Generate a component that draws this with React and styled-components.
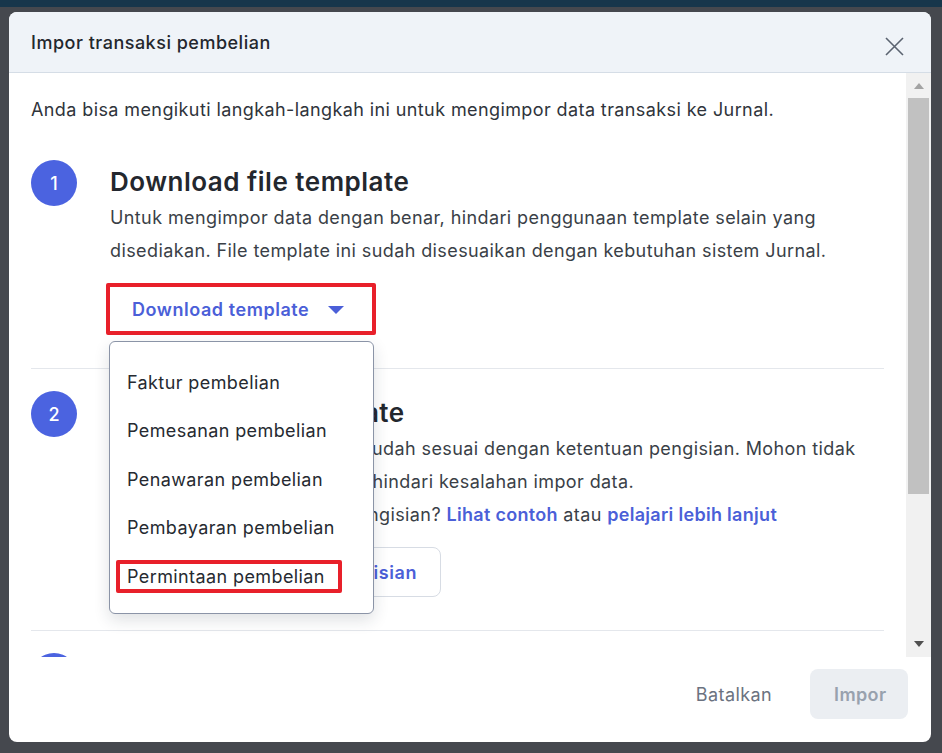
import React from "react";
import styled, { createGlobalStyle } from "styled-components";

const GlobalStyle = createGlobalStyle`
  html, body {
    margin: 0;
    padding: 0;
    background: #45484e;
  }
  body {
    font-family: "Inter", "Noto Sans", sans-serif;
    color: #2b2f36;
  }
  * { box-sizing: border-box; }
`;

const Backdrop = styled.div`
  width: 942px;
  height: 753px;
  background: #45484e;
  border-top: 7px solid #17364b;
  padding: 5px 11px 11px 9px;
`;

const Modal = styled.div`
  width: 922px;
  height: 730px;
  background: #ffffff;
  border-radius: 8px;
  overflow: hidden;
  display: flex;
  flex-direction: column;
`;

const Header = styled.div`
  height: 61px;
  flex: 0 0 61px;
  background: #eff3f8;
  border-bottom: 1px solid #d5dde6;
  display: flex;
  align-items: center;
  justify-content: space-between;
  padding: 0 26px 0 22px;
`;

const HeaderTitle = styled.h1`
  margin: 0;
  font-size: 18px;
  font-weight: 500;
  color: #23272e;
  letter-spacing: 0.5px;
`;

const CloseButton = styled.button`
  border: none;
  background: transparent;
  padding: 0;
  margin-top: 8px;
  width: 22px;
  height: 22px;
  display: flex;
  align-items: center;
  justify-content: center;
  cursor: pointer;
`;

const BodyWrap = styled.div`
  flex: 1;
  display: flex;
  overflow: hidden;
`;

const Content = styled.div`
  flex: 1;
  padding: 20px 22px 0 22px;
  overflow: hidden;
`;

const Intro = styled.p`
  margin: 0 0 12px;
  font-size: 18px;
  letter-spacing: 0.4px;
  line-height: 33px;
  color: #2f343b;
`;

const Step = styled.div`
  display: flex;
  gap: 33px;
  padding: 22px 0 33px;
  border-bottom: 1px solid #e4e7ec;
`;

const StepNumber = styled.div`
  flex: 0 0 46px;
  width: 46px;
  height: 46px;
  border-radius: 50%;
  background: #4b63e0;
  color: #ffffff;
  font-size: 18px;
  font-weight: 500;
  display: flex;
  align-items: center;
  justify-content: center;
`;

const StepBody = styled.div`
  flex: 1;
  display: flex;
  flex-direction: column;
  align-items: flex-start;
`;

const StepTitle = styled.h2`
  margin: 3px 0 0;
  font-size: 26px;
  letter-spacing: 0.5px;
  line-height: 38px;
  font-weight: 600;
  color: #23272e;
`;

const StepText = styled.p`
  margin: 0;
  font-size: 18px;
  letter-spacing: 0.4px;
  line-height: 33px;
  color: #3a3f47;
`;

const Link = styled.a`
  color: #4b5fd8;
  font-weight: 600;
  text-decoration: none;
  letter-spacing: 0.3px;
`;

const DropdownAnchor = styled.div`
  position: relative;
  margin: 16px 0 0 -4px;
`;

const Highlight = styled.div`
  border: 4px solid #e8202a;
  border-radius: 2px;
`;

const DownloadButton = styled.button`
  display: flex;
  align-items: center;
  gap: 19px;
  width: 262px;
  height: 44px;
  border: none;
  background: #ffffff;
  padding: 0 0 0 22px;
  font-family: "Inter", sans-serif;
  font-size: 18px;
  letter-spacing: 0.55px;
  font-weight: 600;
  color: #4b5fd8;
  cursor: pointer;
`;

const Caret = styled.span`
  width: 0;
  height: 0;
  border-left: 8px solid transparent;
  border-right: 8px solid transparent;
  border-top: 8px solid #4b5fd8;
  margin-top: 2px;
`;

const Menu = styled.ul`
  position: absolute;
  top: 58px;
  left: 3px;
  width: 265px;
  margin: 0;
  padding: 16px 0 12px;
  list-style: none;
  background: #ffffff;
  border: 1px solid #8b94a7;
  border-radius: 6px;
  box-shadow: 0 6px 16px rgba(30, 40, 60, 0.14);
  z-index: 5;
`;

const MenuItem = styled.li`
  height: 48.5px;
  display: flex;
  align-items: center;
  padding-left: 17px;
  font-size: 18px;
  letter-spacing: 0.4px;
  color: #262a31;
`;

const MenuLabel = styled.span`
  display: inline-block;
  ${(p) =>
    p.$highlighted &&
    `
    border: 4px solid #e8202a;
    border-radius: 2px;
    margin-left: -11px;
    padding: 2px 13px 2px 7px;
  `}
`;

const OutlineButton = styled.button`
  margin-top: 16px;
  height: 50px;
  padding: 0 23px;
  border: 1px solid #d7dce4;
  border-radius: 8px;
  background: #ffffff;
  font-family: "Inter", sans-serif;
  font-size: 18px;
  letter-spacing: 0.55px;
  font-weight: 600;
  color: #4b5fd8;
`;

const Scrollbar = styled.div`
  flex: 0 0 25px;
  background: #f1f1f1;
  display: flex;
  flex-direction: column;
  align-items: center;
  padding: 10px 0 10px;
`;

const Arrow = styled.span`
  width: 0;
  height: 0;
  border-left: 5px solid transparent;
  border-right: 5px solid transparent;
  ${(p) =>
    p.$down
      ? `border-top: 6px solid #505050;`
      : `border-bottom: 6px solid #a3a3a3;`}
`;

const Thumb = styled.div`
  width: 21px;
  height: 396px;
  margin-top: 9px;
  background: #c1c1c1;
`;

const Track = styled.div`
  flex: 1;
`;

const Footer = styled.div`
  flex: 0 0 85px;
  display: flex;
  justify-content: flex-end;
  align-items: flex-start;
  gap: 14px;
  padding: 12px 23px 23px;
`;

const FooterButton = styled.button`
  height: 50px;
  padding: 0 24px;
  border: none;
  border-radius: 8px;
  font-family: "Inter", sans-serif;
  font-size: 18px;
  letter-spacing: 0.4px;
  background: ${(p) => (p.$primary ? "#ebeef2" : "transparent")};
  color: ${(p) => (p.$primary ? "#98a1ae" : "#6b7280")};
  font-weight: ${(p) => (p.$primary ? 600 : 400)};
  width: ${(p) => (p.$primary ? "98px" : "auto")};
`;

const templates = [
  "Faktur pembelian",
  "Pemesanan pembelian",
  "Penawaran pembelian",
  "Pembayaran pembelian",
  "Permintaan pembelian",
];

export default function App() {
  return (
    <>
      <GlobalStyle />
      <Backdrop>
        <Modal>
          <Header>
            <HeaderTitle>Impor transaksi pembelian</HeaderTitle>
            <CloseButton aria-label="Tutup">
              <svg width="19" height="19" viewBox="0 0 19 19">
                <path
                  d="M1 1 L18 18 M18 1 L1 18"
                  stroke="#5b6370"
                  strokeWidth="1.6"
                  fill="none"
                />
              </svg>
            </CloseButton>
          </Header>
          <BodyWrap>
            <Content>
              <Intro>
                Anda bisa mengikuti langkah-langkah ini untuk mengimpor data
                transaksi ke Jurnal.
              </Intro>

              <Step>
                <StepNumber>1</StepNumber>
                <StepBody>
                  <StepTitle>Download file template</StepTitle>
                  <StepText>
                    Untuk mengimpor data dengan benar, hindari penggunaan
                    template selain yang
                    <br />
                    disediakan. File template ini sudah disesuaikan dengan
                    kebutuhan sistem Jurnal.
                  </StepText>
                  <DropdownAnchor>
                    <Highlight>
                      <DownloadButton>
                        Download template
                        <Caret />
                      </DownloadButton>
                    </Highlight>
                    <Menu>
                      {templates.map((t, i) => (
                        <MenuItem key={t}>
                          <MenuLabel $highlighted={i === templates.length - 1}>
                            {t}
                          </MenuLabel>
                        </MenuItem>
                      ))}
                    </Menu>
                  </DropdownAnchor>
                </StepBody>
              </Step>

              <Step>
                <StepNumber>2</StepNumber>
                <StepBody>
                  <StepTitle>Isi data di file template</StepTitle>
                  <StepText>
                    Pastikan data yang kamu isi sudah sesuai dengan ketentuan
                    pengisian. Mohon tidak
                    <br />
                    mengubah kolom untuk menghindari kesalahan impor data.
                    <br />
                    Masih bingung untuk cara pengisian?{" "}
                    <Link>Lihat contoh</Link> atau{" "}
                    <Link>pelajari lebih lanjut</Link>
                  </StepText>
                  <OutlineButton>Lihat panduan untuk pengisian</OutlineButton>
                </StepBody>
              </Step>

              <Step>
                <StepNumber>3</StepNumber>
                <StepBody>
                  <StepTitle>Upload file template</StepTitle>
                </StepBody>
              </Step>
            </Content>
            <Scrollbar>
              <Arrow />
              <Thumb />
              <Track />
              <Arrow $down />
            </Scrollbar>
          </BodyWrap>
          <Footer>
            <FooterButton>Batalkan</FooterButton>
            <FooterButton $primary>Impor</FooterButton>
          </Footer>
        </Modal>
      </Backdrop>
    </>
  );
}
